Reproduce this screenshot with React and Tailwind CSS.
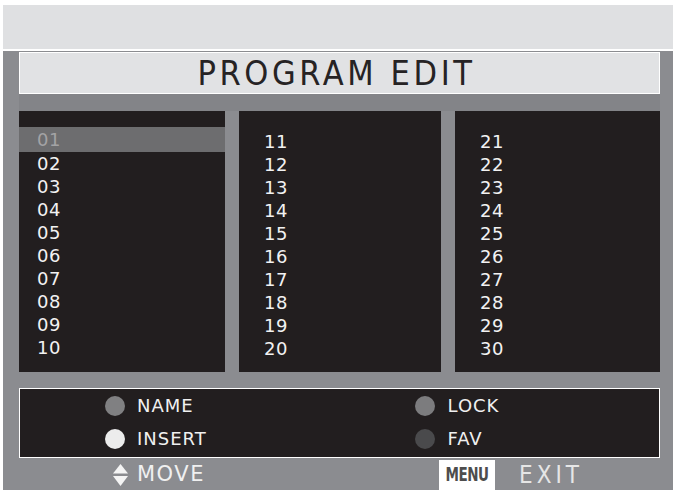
import React from 'react';

const font = { fontFamily: '"DejaVu Sans", Verdana, sans-serif' };
const condensed = { fontFamily: '"DejaVu Sans Condensed", "DejaVu Sans", sans-serif' };

const Column = ({ nums, first = false, width }) => (
    <div className={`${width} h-full bg-[#221e1f] flex flex-col ${first ? 'pt-[16px]' : 'pt-[19px]'}`}>
        {nums.map((n, i) => (
            <div
                key={n}
                className={`flex items-center text-[18px] tracking-[0.5px] ${first ? 'pl-[18px]' : 'pl-[25px]'} ${first && i === 0 ? 'h-[25px] bg-[#6d6d6f] text-[#a3a3a5]' : 'h-[23px] text-[#f2f2f2]'}`}
            >
                {n}
            </div>
        ))}
    </div>
);

const Dot = ({ color }) => <span className={`w-[20px] h-[20px] rounded-full ${color}`} />;

export default function App() {
    const range = (a) => Array.from({ length: 10 }, (_, i) => String(a + i).padStart(2, '0'));

    return (
        <div className="w-[673px] h-[490px] bg-white pt-[5px] pl-[3px] flex flex-col overflow-hidden" style={font}>
            {/* top band */}
            <div className="h-[44px] bg-[#dfe0e2] shrink-0" />
            <div className="h-[2px] bg-white shrink-0" />

            {/* frame */}
            <div className="flex-1 bg-[#8b8c90] pl-[16px] pr-[13px] flex flex-col">
                <div className="mt-[1px] h-[42px] border border-white bg-[#e1e2e4] flex items-center justify-center text-[34px] tracking-[3.6px] pr-[6px] text-[#262324]" style={condensed}>
                    PROGRAM EDIT
                </div>
                <div className="h-[17px] bg-[#838488]" />

                <div className="h-[261px] flex gap-[14px]">
                    <Column nums={range(1)} first width="w-[206px]" />
                    <Column nums={range(11)} width="w-[202px]" />
                    <Column nums={range(21)} width="w-[205px]" />
                </div>

                <div className="mt-[16px] h-[70px] border border-white bg-[#221e1f] grid grid-cols-2 text-[18px] tracking-[1px] text-[#f0f0f0]">
                    <div className="flex flex-col pl-[85px] pt-[6px] gap-[12px]">
                        <div className="flex items-center gap-[12px] h-[21px]"><Dot color="bg-[#808082]" />NAME</div>
                        <div className="flex items-center gap-[12px] h-[21px]"><Dot color="bg-[#ececec]" />INSERT</div>
                    </div>
                    <div className="flex flex-col pl-[75px] pt-[6px] gap-[12px]">
                        <div className="flex items-center gap-[13px] h-[21px]"><Dot color="bg-[#7c7c7e]" />LOCK</div>
                        <div className="flex items-center gap-[13px] h-[21px]"><Dot color="bg-[#4a4a4c]" />FAV</div>
                    </div>
                </div>

                {/* bottom hints */}
                <div className="flex-1 flex items-end">
                    <div className="w-[320px] h-[30px] flex items-center pl-[94px] pb-[1px] text-[21px] tracking-[1.5px] text-[#f0f0f0]">
                        <svg width="15" height="22" viewBox="0 0 15 22" className="mr-[9px]">
                            <polygon points="7.5,0 15,9.5 0,9.5" fill="#f4f4f4" />
                            <polygon points="0,12 15,12 7.5,22" fill="#f4f4f4" />
                        </svg>
                        MOVE
                    </div>
                    <div className="flex items-center h-[30px] pl-[100px]">
                        <div className="w-[56px] h-[30px] bg-white flex items-center justify-center text-[15px] font-bold text-[#4d4d4d] tracking-[-0.5px]" style={condensed}>
                            <span className="inline-block scale-y-125">MENU</span>
                        </div>
                        <span className="ml-[24px] text-[24px] tracking-[4px] text-[#e6e6e6]" style={condensed}>EXIT</span>
                    </div>
                </div>
            </div>
        </div>
    );
}
